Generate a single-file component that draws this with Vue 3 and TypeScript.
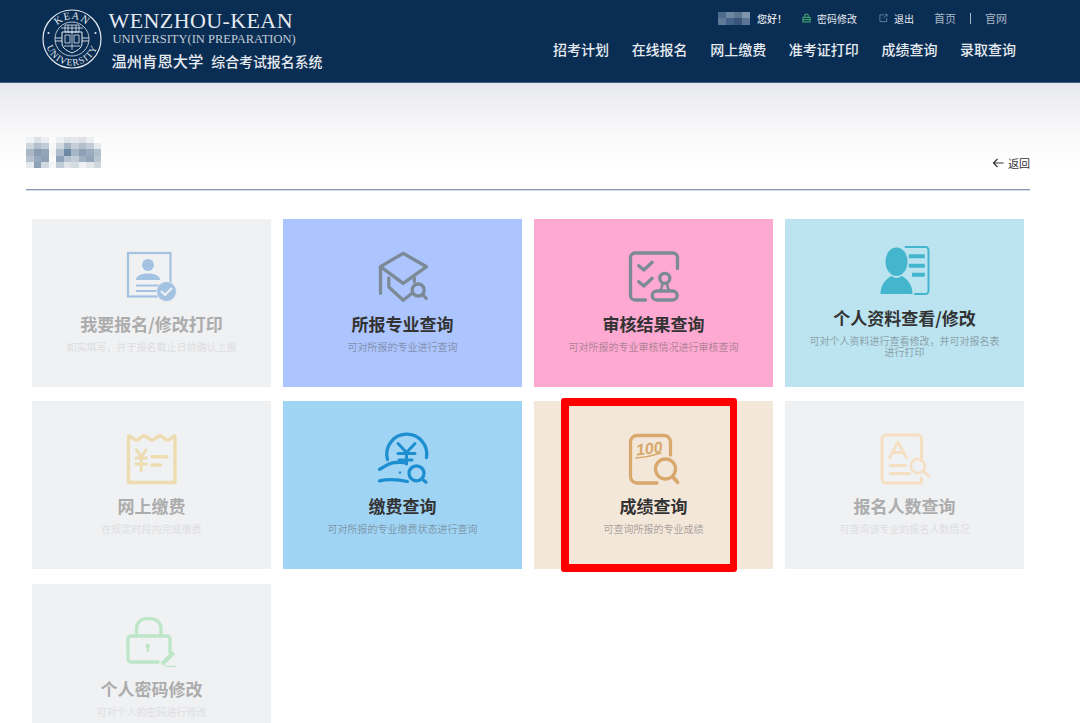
<template>
  <div class="page">
    <header class="topbar">
      <div class="brand">
        <svg class="seal" viewBox="0 0 60 60" fill="none" stroke="currentColor">
          <defs>
            <path id="sealTop" d="M10 30a20 20 0 0 1 40 0" />
            <path id="sealBottom" d="M3.500 30a26.500 26.500 0 0 0 53 0" />
          </defs>
          <circle cx="30" cy="30" r="29" stroke-width="1.200" />
          <circle cx="30" cy="30" r="17" stroke-width="0.800" />
          <text class="seal-text" font-size="10.500"><textPath href="#sealTop" startOffset="50%" text-anchor="middle">KEAN</textPath></text>
          <text class="seal-text" font-size="9.500"><textPath href="#sealBottom" startOffset="50%" text-anchor="middle">UNIVERSITY</textPath></text>
          <circle cx="6.500" cy="24" r="1.100" fill="currentColor" stroke="none" />
          <circle cx="53.500" cy="24" r="1.100" fill="currentColor" stroke="none" />
          <!-- crest -->
          <path d="M20 23h20v11c0 6-6 8-10 10-4-2-10-4-10-10z" stroke-width="1" />
          <path d="M23 26h5v8h-5zM32 26h5v8h-5zM30 23v18M22 37h16M23 16h14v7H23zM26 16v7M30 16v7M34 16v7M19 19h22" stroke-width="0.800" />
          <path d="M13 29h7M40 29h7M13 32h7M40 32h7" stroke-width="0.900" />
        </svg>
        <div class="brand-text">
          <div class="brand-en">WENZHOU-KEAN</div>
          <div class="brand-sub">UNIVERSITY(IN PREPARATION)</div>
          <div class="brand-cn"><span class="brand-school">温州肯恩大学</span><span class="brand-system">综合考试报名系统</span></div>
        </div>
      </div>
      <div class="top-right">
        <div class="user-row">
          <span class="user-mosaic">
            <i v-for="(c, i) in userTiles" :key="i" :style="{ background: c }"></i>
          </span>
          <span class="hello">您好！</span>
          <a class="user-link">
            <svg class="mini green" viewBox="0 0 10 10" fill="none" stroke="currentColor" stroke-width="1.400">
              <rect x="1" y="4.400" width="8" height="5" />
              <path d="M3 4V2.600a2 2 0 0 1 4 0V4M1 6.800h8" />
            </svg>
            密码修改
          </a>
          <a class="user-link logout">
            <svg class="mini steel" viewBox="0 0 10 10" fill="none" stroke="currentColor" stroke-width="1">
              <path d="M5.500 1.500H1v7.500h7.500V5M5 5.200 8.800 1M6.500 1h2.500v2.500" />
            </svg>
            退出
          </a>
          <a class="plain-link">首页</a>
          <span class="divider"></span>
          <a class="plain-link">官网</a>
        </div>
        <nav class="main-nav">
          <a v-for="item in navItems" :key="item">{{ item }}</a>
        </nav>
      </div>
    </header>

    <main class="content">
      <div class="title-row">
        <div class="title-mosaic">
          <i v-for="(c, i) in titleTiles" :key="i" :style="{ background: c }"></i>
        </div>
        <a class="back">
          <svg viewBox="0 0 12 12" fill="none" stroke="currentColor" stroke-width="1.200">
            <path d="M11.500 6H1.500M5.500 2 1.500 6l4 4" />
          </svg>
          返回
        </a>
      </div>

      <section class="card-grid">
        <article v-for="card in cards" :key="card.icon" class="card" :class="[`card-${card.icon}`, { disabled: card.disabled }]">
          <svg class="card-icon" viewBox="0 0 50 50" fill="none" stroke="currentColor" stroke-width="3.300" stroke-linecap="round" stroke-linejoin="round">
            <template v-if="card.icon === 'apply'">
              <rect x="1" y="1" width="42.500" height="43.500" stroke-width="2.200" stroke-linejoin="miter" />
              <circle cx="21" cy="13" r="6" fill="currentColor" stroke="none" />
              <path d="M9 28c0-4 5-6.500 12-6.500S33 24 33 28z" fill="currentColor" stroke="none" />
              <path d="M9 33.500h24M9 39h24" stroke-width="1.800" stroke-linecap="butt" />
              <circle cx="39.500" cy="39.500" r="10" fill="currentColor" stroke="#f0f1f3" stroke-width="0.800" />
              <path d="m34.500 39.500 3.500 3.500 6.500-6.500" stroke="#f0f1f3" stroke-width="2" />
            </template>
            <template v-else-if="card.icon === 'major'">
              <path d="M2.500 14.700 25.200 1.300l23.300 13.400-23.300 16.600z" />
              <path d="M2.500 14.700v26.600M10.800 26v9l14.400 13.300 8.800-7M36.300 26v3.500" />
              <circle cx="40.200" cy="38" r="6" />
              <path d="m44.500 42.300 3.700 4" />
            </template>
            <template v-else-if="card.icon === 'audit'">
              <path d="M16.500 48H6a4.500 4.500 0 0 1-4.500-4.500V5.500A4.500 4.500 0 0 1 6 1h38a4.500 4.500 0 0 1 4.500 4.500v11" />
              <path d="m9.800 13.700 5 4.300 8.400-7.700M9.800 29.700l5 4.300 8.400-7.700" />
              <circle cx="35.800" cy="26.300" r="5" />
              <path d="M33.500 31.500c0 3-1 5-2.500 7.500M38 31.500c0 3 1 5 2.500 7.500" stroke-width="2.600" />
              <rect x="23.200" y="39" width="25" height="9" rx="4.500" />
            </template>
            <template v-else-if="card.icon === 'profile'">
              <ellipse cx="16.500" cy="15.700" rx="11" ry="14.300" fill="currentColor" stroke="none" />
              <path d="M.5 48c0-9.500 5.500-15 11-18 3 2.500 7 2.500 10 0 5.500 2.500 11 8.500 11 18z" fill="currentColor" stroke="none" />
              <path d="M25.500 1h20a3 3 0 0 1 3 3v41a3 3 0 0 1-3 3H35" stroke-width="2" />
              <path d="M28.800 8.300h16v4h-16zM28.800 17.700h16v4h-16zM32 26.700h12.800v4H32z" fill="currentColor" stroke="none" />
            </template>
            <template v-else-if="card.icon === 'pay'">
              <path d="M1.500 48.500V2c4 0 4 4 8 4s4-4 7.800-4 4 4 7.700 4 4-4 7.800-4 4 4 7.800 4 4-4 7.400-4v46.500z" />
              <path d="m9.500 16 4.700 7 4.700-7M9 24h10.500M9 30h10.500M14.200 23v13.500" stroke-width="3" />
              <path d="M25 22.700h15M25 31h8.500" stroke-width="3.400" />
            </template>
            <template v-else-if="card.icon === 'payquery'">
              <path d="M9.500 25.500A20 20 0 1 1 48.500 23.500" />
              <path d="m20 9.500 8.500 9 8.500-9M20 19.500h17M21 26h13M28.500 19v11" stroke-width="3" />
              <path d="M1.500 35.300c5-2.500 8-5.500 13-6.500 5-1 12-.5 14 .5" />
              <path d="M1.500 46.800c7-1.500 18-1.500 28 .7" />
              <circle cx="22" cy="38.500" r="1.200" fill="currentColor" stroke="none" />
              <circle cx="38.500" cy="39.300" r="7.500" />
              <path d="m44 45 4 3.300" />
            </template>
            <template v-else-if="card.icon === 'score'">
              <path d="M28 49H8a6.500 6.500 0 0 1-6.500-6.500V8A6.500 6.500 0 0 1 8 1.500h27A6.500 6.500 0 0 1 41.500 8v13" />
              <text class="score-num" x="7" y="20" font-size="16" transform="rotate(-7 20 15)">100</text>
              <path d="M7 24c8-.5 16-2 25-5" stroke-width="1.500" />
              <circle cx="36.500" cy="35" r="10" />
              <path d="m43.500 42.500 5 5.800" stroke-width="3.800" />
            </template>
            <template v-else-if="card.icon === 'count'">
              <path d="M41.500 27V5a4 4 0 0 0-4-4H6a4 4 0 0 0-4 4v40a4 4 0 0 0 4 4h35.500v-5" stroke-width="3" />
              <path d="M9.500 24 18 8l8.500 16M12.500 18.500h11" stroke-width="2.800" />
              <path d="M10.500 31.500h15M10.500 39.500h19" stroke-width="3" />
              <circle cx="37.800" cy="32" r="7" stroke-width="2.600" />
              <path d="m43 37 5.800 5" stroke-width="2.800" />
            </template>
            <template v-else-if="card.icon === 'password'">
              <path d="M31 45H4a3 3 0 0 1-3-3V22a3 3 0 0 1 3-3h36a3 3 0 0 1 3 3v13" />
              <path d="M9.500 19V11A10 9.500 0 0 1 19.500 1.700h5A10 9.500 0 0 1 34 11v8" />
              <circle cx="20.800" cy="29" r="2.200" fill="currentColor" stroke="none" />
              <path d="M20.800 29v5" stroke-width="2.200" />
              <path d="M35 47.300 46.500 35.500" stroke-width="4.500" stroke-linecap="butt" />
              <path d="M38.500 49.300h10.500" stroke-width="1.200" />
            </template>
          </svg>
          <h3 class="card-title">{{ card.title }}</h3>
          <p class="card-desc">{{ card.desc }}</p>
          <span v-if="card.icon === 'score'" class="highlight"></span>
        </article>
      </section>
    </main>
  </div>
</template>

<script setup lang="ts">
interface Card {
  icon: string;
  title: string;
  desc: string;
  disabled?: boolean;
}

const navItems = ['招考计划', '在线报名', '网上缴费', '准考证打印', '成绩查询', '录取查询'];

const userTiles = ['#4d6a8a', '#6e87a1', '#5a7694', '#7e94aa', '#5f7a97', '#42628a', '#39567a', '#5a7694'];

// mosaic over the applicant name
const titleTiles = [
  '#f2f3f5', '#dde2e7', '#eceef1', '#fbfbfc', '#eef0f3', '#dfe3e8', '#e4e7eb', '#dde1e6', '#eceef1', '#fdfdfd',
  '#cdd5de', '#b4c0cd', '#c3ccd6', '#f6f7f8', '#d0d8e0', '#a6b5c5', '#c6cfd9', '#b3bfcc', '#c3ccd6', '#e6e9ed',
  '#aab7c6', '#8a9db2', '#93a5b8', '#f4f5f7', '#aebdcc', '#6d88a5', '#a8b7c6', '#8da0b5', '#9cacbe', '#b2bfcc',
  '#b7c3d0', '#95a8bc', '#8fa1b5', '#fafafb', '#8ea3b9', '#b8c4d1', '#c4cdd7', '#a2b1c2', '#93a5b9', '#bac6d2',
  '#e6eaee', '#8ba2b9', '#d0d9e1', '#f3f5f7', '#c0ccd7', '#dfe4e9', '#d4dbe3', '#eef0f3', '#e2e6ea', '#d0d7df',
];

const cards: Card[] = [
  { icon: 'apply', title: '我要报名/修改打印', desc: '如实填写，并于报名截止日前确认上报', disabled: true },
  { icon: 'major', title: '所报专业查询', desc: '可对所报的专业进行查询' },
  { icon: 'audit', title: '审核结果查询', desc: '可对所报的专业审核情况进行审核查询' },
  { icon: 'profile', title: '个人资料查看/修改', desc: '可对个人资料进行查看修改，并可对报名表进行打印' },
  { icon: 'pay', title: '网上缴费', desc: '在规定时段内完成缴费', disabled: true },
  { icon: 'payquery', title: '缴费查询', desc: '可对所报的专业缴费状态进行查询' },
  { icon: 'score', title: '成绩查询', desc: '可查询所报的专业成绩' },
  { icon: 'count', title: '报名人数查询', desc: '可查询该专业的报名人数情况', disabled: true },
  { icon: 'password', title: '个人密码修改', desc: '可对个人的密码进行修改', disabled: true },
];
</script>

<style>
html,
body {
  height: 100%;
  overflow: hidden;
  background: #fff;
}
</style>

<style scoped>
.page {
  font-family: "Noto Sans CJK SC", "Noto Sans", sans-serif;
  color: #333;
}

.topbar {
  height: 82px;
  display: flex;
  justify-content: space-between;
  background: #0a2d53;
  border-bottom: 1px solid #3f6285;
  color: #e6ebf1;
}

.brand {
  display: flex;
  align-items: flex-start;
  gap: 7px;
  padding: 9px 0 0 41.500px;
}

.seal {
  width: 60px;
  height: 60px;
  color: #e4e9ef;
}

.seal-text {
  font-family: "Liberation Serif", serif;
  fill: currentColor;
  stroke: none;
  letter-spacing: 1px;
}

.brand-en {
  font-family: "Liberation Serif", serif;
  font-size: 22px;
  line-height: 24px;
  letter-spacing: 0.4px;
  white-space: nowrap;
}

.brand-sub {
  font-family: "Liberation Serif", serif;
  font-size: 12.500px;
  line-height: 13px;
  margin-left: 4px;
  color: #c3cdd9;
}

.brand-cn {
  display: flex;
  align-items: baseline;
  gap: 8px;
  margin: 4px 0 0 3px;
  line-height: 20px;
  font-weight: 500;
}

.brand-school {
  font-size: 15.300px;
}

.brand-system {
  font-size: 13.900px;
}

.top-right {
  display: flex;
  flex-direction: column;
  align-items: flex-end;
  padding: 11px 64px 0 0;
}

.user-row {
  display: flex;
  align-items: center;
  height: 14px;
  margin-right: 9px;
  font-size: 10px;
  color: #e6ebf1;
}

.user-mosaic {
  display: grid;
  grid-template-columns: repeat(4, 8px);
  grid-auto-rows: 6.500px;
  width: 32px;
}

.hello {
  margin-left: 7px;
  font-size: 10px;
  font-weight: 500;
  width: 30px;
}

.user-link {
  display: flex;
  align-items: center;
  gap: 6px;
  margin-left: 15px;
  font-size: 10px;
}

.user-link.logout {
  margin-left: 22px;
  margin-right: 20px;
}

.mini {
  width: 9px;
  height: 10px;
}

.green {
  color: #3d9a6e;
}

.steel {
  color: #5f87ad;
}

.plain-link {
  font-size: 11px;
  color: #a9b7c6;
}

.divider {
  width: 1px;
  height: 11px;
  margin: 0 14px;
  background: #a9b7c6;
}

.main-nav {
  display: flex;
  gap: 22.600px;
  margin-top: 13px;
  font-size: 14px;
  line-height: 22px;
  font-weight: 500;
}

.content {
  padding: 0 50px 0 26px;
  background: linear-gradient(#e8e9ee 0, #f9f9fa 50px, #fff 85px);
}

.title-row {
  display: flex;
  justify-content: space-between;
  align-items: flex-end;
  height: 106px;
  border-bottom: 1px solid #8598b3;
  box-shadow: 0 1px 0 #d5dce6;
}

.title-mosaic {
  display: grid;
  grid-template-columns: repeat(10, 7.500px);
  grid-auto-rows: 6.200px;
  margin-bottom: 21px;
}

.back {
  display: flex;
  align-items: center;
  gap: 4px;
  margin-bottom: 19px;
  font-size: 11px;
  line-height: 14px;
  color: #333;
}

.back svg {
  width: 12px;
  height: 12px;
}

.card-grid {
  display: grid;
  grid-template-columns: repeat(4, 239px);
  grid-auto-rows: 168px;
  gap: 14.500px 12px;
  padding: 28.500px 6px 0;
}

.card {
  position: relative;
  display: flex;
  flex-direction: column;
  align-items: center;
  justify-content: center;
  padding: 0 22px 1.500px;
  text-align: center;
}

.card-icon {
  width: 50px;
  height: 50px;
  flex: none;
  margin-bottom: 11px;
  overflow: visible;
}

.card-title {
  margin: 0;
  font-size: 17px;
  line-height: 22px;
  font-weight: 700;
  color: #333;
}

.card-desc {
  margin: 6px 0 0;
  font-size: 10px;
  line-height: 11.500px;
  color: rgba(90, 90, 90, 0.5);
}

.card.disabled {
  background: #f0f1f3;
}

.card.disabled .card-title {
  color: #acacac;
}

.card.disabled .card-desc {
  color: #dddee0;
}

.card-apply .card-icon {
  color: #a4c3e3;
}

.card-major {
  background: #acc5fe;
}

.card-major .card-icon {
  color: #7b8a96;
}

.card-audit {
  background: #fea9d1;
}

.card-audit .card-icon {
  color: #7b8a96;
}

.card-profile {
  background: #bbe3f0;
}

.card-profile .card-icon {
  color: #43b5cd;
}

.card-pay .card-icon {
  color: #eddcb0;
}

.card-payquery {
  background: #a0d4f5;
}

.card-payquery .card-icon {
  color: #1d8fd0;
}

.card-score {
  background: #f3e7da;
}

.card-score .card-icon {
  color: #d9a86c;
}

.score-num {
  font-family: "Liberation Sans", sans-serif;
  font-style: italic;
  font-weight: 700;
  fill: currentColor;
  stroke: none;
}

.card-count .card-icon {
  color: #f5dfc3;
}

.card-password .card-icon {
  color: #bde6c8;
}

/* red annotation drawn over the score card */
.highlight {
  position: absolute;
  left: 27px;
  top: -3px;
  width: 176px;
  height: 174px;
  box-sizing: border-box;
  border: 8px solid #fe0000;
  border-right-width: 7px;
  border-radius: 3px;
}
</style>
